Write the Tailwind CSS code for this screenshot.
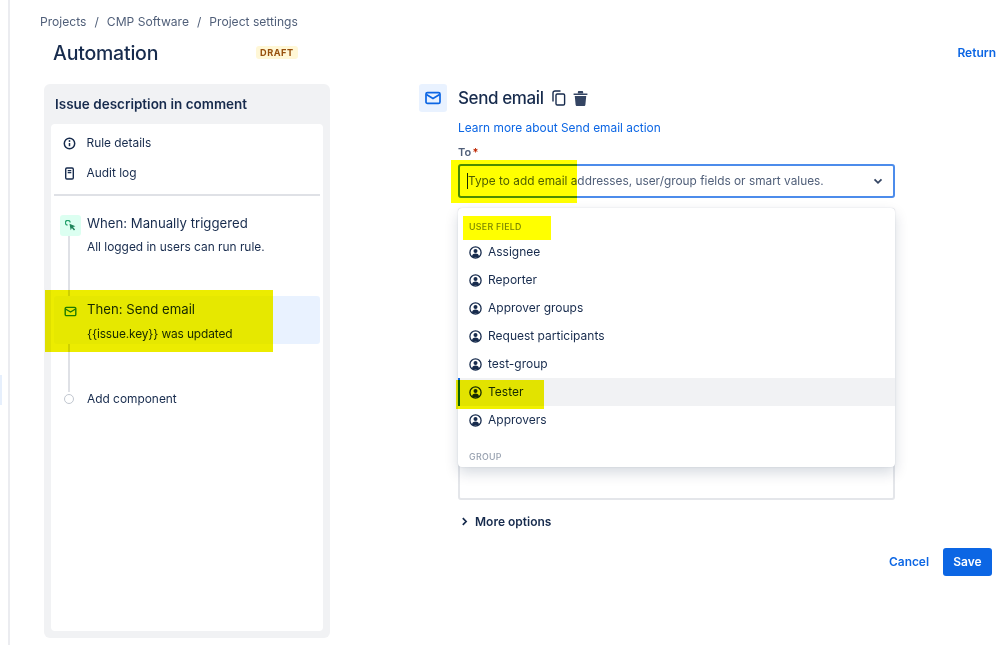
<!doctype html>
<html>
  <head>
    <meta charset="UTF-8" />
    <meta name="viewport" content="width=device-width, initial-scale=1.0" />
    <script src="https://cdn.jsdelivr.net/npm/@tailwindcss/browser@4"></script>
    <title>Automation</title>
  </head>
  <body class="bg-white">
    <div class="relative flex h-[645px] w-[999px] overflow-hidden bg-white font-['Inter','Liberation_Sans',sans-serif] text-[#172b4d]">
      <!-- left nav edge -->
      <div class="h-full w-[10px] shrink-0 border-r-2 border-[#ebecf0]"></div>
      <div class="absolute left-0 top-[375px] h-[30px] w-[2px] bg-[#e6effc]"></div>

      <div class="flex-1">
        <!-- breadcrumb -->
        <div class="flex h-[14px] mt-[15px] ml-[30px] items-center text-[12.1px] text-[#505f79]">
          <span>Projects</span><span class="mx-[8px]">/</span><span>CMP Software</span><span class="mx-[8px]">/</span><span>Project settings</span>
        </div>

        <!-- title row -->
        <div class="mt-[10px] flex h-[30px] items-center pl-[43px] pr-[3px]">
          <h1 class="w-[203px] text-[19.5px] font-medium tracking-[-0.2px] text-[#172b4d]">Automation</h1>
          <span class="mb-[3px] rounded-[3px] bg-[#fff7d6] px-[4px] text-[9.2px] leading-[13px] font-bold tracking-[0.5px] text-[#974f0c]">DRAFT</span>
          <a class="mb-[2px] ml-auto text-[12px] font-semibold text-[#0c66e4]">Return</a>
        </div>

        <div class="mt-[15px] flex">
          <!-- rule sidebar -->
          <div class="ml-[34px] flex h-[554px] w-[286px] shrink-0 flex-col rounded-[6px] bg-[#f1f2f4] px-[7px] pb-[7px]">
            <div class="flex h-[40px] items-center px-[4px] text-[13.5px] font-semibold">Issue description in comment</div>
            <div class="relative flex-1 rounded-[4px] bg-white px-[3px] pt-[4px]">
              <div class="flex h-[30px] items-center pl-[9px] text-[11.9px]">
                <svg class="mr-[10.5px] h-[13px] w-[13px]" viewBox="0 0 13 13" fill="none"><circle cx="6.5" cy="6.5" r="5.2" stroke="#172b4d" stroke-width="1.5"/><path d="M6.5 6v3.2" stroke="#172b4d" stroke-width="1.5"/><circle cx="6.5" cy="4" r=".9" fill="#172b4d"/></svg>
                <span>Rule details</span>
              </div>
              <div class="flex h-[30px] items-center pl-[9px] text-[11.9px]">
                <svg class="mr-[10.5px] h-[13px] w-[13px]" viewBox="0 0 13 13" fill="none"><rect x="2.7" y="1" width="7.6" height="11" rx="1.2" stroke="#172b4d" stroke-width="1.4"/><path d="M4.7 3.6h3.6M4.7 5.6h3.6" stroke="#172b4d" stroke-width="1.3"/></svg>
                <span>Audit log</span>
              </div>
              <div class="mt-[6px] h-[2px] bg-[#dfe1e6]"></div>

              <!-- connector between steps -->
              <div class="absolute left-[17px] top-[108px] h-[160px] w-[2px] bg-[#dfe1e6]"></div>

              <div class="relative mt-[19px] flex pl-[6px]">
                <div class="mr-[6px] flex h-[21px] w-[21px] items-center justify-center rounded-[3px] bg-[#dcfff1]">
                  <svg class="h-[12px] w-[12px]" viewBox="0 0 15 15" fill="none"><path d="M3.2 6.4a3 3 0 1 1 3.3-3.2" stroke="#22a06b" stroke-width="1.500"/><path d="M5.6 4.6l7.4 3.2-3 1.1 2.6 3-1.4 1.2-2.600-3-1.500 2.700z" fill="#1f845a"/></svg>
                </div>
                <div>
                  <div class="text-[13.2px] leading-[17px]">When: Manually triggered</div>
                  <div class="mt-[7px] text-[11.9px] leading-[15px]">All logged in users can run rule.</div>
                </div>
              </div>

              <div class="relative mt-[42px] flex h-[48px] rounded-[3px] bg-[linear-gradient(to_right,#f9fbff_219px,#e9f2ff_219px)] pl-[6px] pt-[5px]">
                <div class="mr-[6px] flex h-[21px] w-[21px] items-center justify-center">
                  <svg class="h-[13px] w-[13px]" viewBox="0 0 13 13" fill="none"><rect x="1.2" y="2.4" width="10.6" height="8.2" rx="1.2" stroke="#1f845a" stroke-width="1.4"/><path d="M1.5 4l5 3 5-3" stroke="#1f845a" stroke-width="1.4"/></svg>
                </div>
                <div>
                  <div class="text-[13.2px] leading-[17px]">Then: Send email</div>
                  <div class="mt-[8px] text-[11.9px] leading-[15px] tracking-[-0.12px]">{{issue.key}} was updated</div>
                </div>
              </div>

              <div class="relative mt-[47px] flex items-center pl-[10px] text-[11.9px] leading-[15px]">
                <span class="mr-[13px] h-[10px] w-[10px] rounded-full border-[1.5px] border-[#c1c7d0] bg-white"></span>
                <span>Add component</span>
              </div>
            </div>
          </div>

          <!-- send email panel -->
          <div class="ml-[89px] w-[476px]">
            <div class="flex items-center">
              <div class="flex h-[28px] w-[28px] items-center justify-center rounded-[3px] bg-[#e9f2ff]">
                <svg class="h-[18px] w-[18px]" viewBox="0 0 18 18" fill="none"><rect x="2" y="3.6" width="14" height="10.8" rx="1.5" stroke="#0c66e4" stroke-width="1.7"/><path d="M2.4 5.6l6.6 4 6.6-4" stroke="#0c66e4" stroke-width="1.7"/></svg>
              </div>
              <h2 class="ml-[11px] text-[17px] leading-[28px] font-medium tracking-[-0.4px]">Send email</h2>
              <svg class="ml-[7px] h-[16px] w-[16px]" viewBox="0 0 16 16" fill="none"><path d="M2 11.5V3a2 2 0 0 1 2-2h5.5" stroke="#172b4d" stroke-width="1.4"/><rect x="5" y="4" width="8.6" height="11" rx="1.3" stroke="#172b4d" stroke-width="1.4"/></svg>
              <svg class="ml-[5px] h-[17px] w-[17px]" viewBox="0 0 16 16"><path d="M1.5 3.4h13v1.400h-13zM5.500 2c0-.6.4-1 1-1h3c.6 0 1 .4 1 1v1h-5zM2.600 5.600h10.800l-.8 8.200c-.1.7-.6 1.200-1.300 1.200H4.700c-.7 0-1.200-.5-1.300-1.200z" fill="#344563"/></svg>
            </div>

            <div class="pl-[39px]">
              <a class="mt-[8px] block text-[11.9px] leading-[15px] text-[#0c66e4]">Learn more about Send email action</a>
              <div class="mt-[10px] text-[11px] leading-[14px] font-semibold text-[#505f79]">To <span class="-ml-[1.5px] text-[#bf2600]">*</span></div>
              <div class="mt-[5px] flex h-[34px] w-[437px] items-center rounded-[3px] border-2 border-[#4c8ceb] pl-[7px] pr-[10.5px] text-[11.85px] text-[#505f79]">
                <span class="h-[16px] w-px bg-[#172b4d]"></span>
                <span class="flex-1 pt-[1px]">Type to add email addresses, user/group fields or smart values.</span>
                <svg class="h-[10px] w-[10px]" viewBox="0 0 10 10" fill="none"><path d="M1.500 3.300L5 6.800l3.500-3.500" stroke="#344563" stroke-width="1.800"/></svg>
              </div>

              <!-- field behind the open menu -->
              <div class="mt-[10px] h-[292px] w-[437px] rounded-[3px] border-2 border-[#e4e6ea]"></div>

              <div class="mt-[14px] flex items-center text-[12px] leading-[15px] font-semibold">
                <svg class="mr-[6px] ml-[2px] h-[9px] w-[9px]" viewBox="0 0 9 9" fill="none"><path d="M2.800 1.200L6.100 4.500 2.800 7.800" stroke="#172b4d" stroke-width="1.700"/></svg>
                <span>More options</span>
              </div>

              <div class="mt-[19px] flex w-[534px] items-center justify-end">
                <a class="mr-[14px] text-[11.9px] font-semibold text-[#0c66e4]">Cancel</a>
                <button class="h-[28px] w-[49px] rounded-[3px] bg-[#0c66e4] text-[12px] font-semibold text-white">Save</button>
              </div>
            </div>
          </div>
        </div>
      </div>

      <!-- open dropdown menu -->
      <div class="absolute left-[458px] top-[208px] h-[259px] w-[437px] rounded-[4px] bg-white shadow-[0_6px_14px_rgba(9,30,66,0.16),0_0_2px_rgba(9,30,66,0.12)]">
        <div class="mt-[11px] ml-[11px] h-[16px] pt-[1px] text-[8.8px] leading-[14px] font-medium tracking-[0.3px] text-[#7a869a]">USER FIELD</div>
        <div class="mt-[3px] flex flex-col text-[12px]">
          <div class="flex h-[28px] items-center pl-[11px]">
            <svg class="mr-[6px] h-[13px] w-[13px]" viewBox="0 0 13 13" fill="none"><circle cx="6.500" cy="6.500" r="5.600" stroke="#172b4d" stroke-width="1.300"/><circle cx="6.500" cy="5" r="2" fill="#172b4d"/><path d="M3 10.500c0-2 1.500-3 3.500-3s3.500 1 3.500 3l-1.500 1h-4z" fill="#172b4d"/></svg>
            <span>Assignee</span>
          </div>
          <div class="flex h-[28px] items-center pl-[11px]">
            <svg class="mr-[6px] h-[13px] w-[13px]" viewBox="0 0 13 13" fill="none"><circle cx="6.500" cy="6.500" r="5.600" stroke="#172b4d" stroke-width="1.300"/><circle cx="6.500" cy="5" r="2" fill="#172b4d"/><path d="M3 10.500c0-2 1.500-3 3.500-3s3.500 1 3.500 3l-1.500 1h-4z" fill="#172b4d"/></svg>
            <span>Reporter</span>
          </div>
          <div class="flex h-[28px] items-center pl-[11px]">
            <svg class="mr-[6px] h-[13px] w-[13px]" viewBox="0 0 13 13" fill="none"><circle cx="6.500" cy="6.500" r="5.600" stroke="#172b4d" stroke-width="1.300"/><circle cx="6.500" cy="5" r="2" fill="#172b4d"/><path d="M3 10.500c0-2 1.500-3 3.500-3s3.500 1 3.500 3l-1.500 1h-4z" fill="#172b4d"/></svg>
            <span>Approver groups</span>
          </div>
          <div class="flex h-[28px] items-center pl-[11px]">
            <svg class="mr-[6px] h-[13px] w-[13px]" viewBox="0 0 13 13" fill="none"><circle cx="6.500" cy="6.500" r="5.600" stroke="#172b4d" stroke-width="1.300"/><circle cx="6.500" cy="5" r="2" fill="#172b4d"/><path d="M3 10.500c0-2 1.500-3 3.500-3s3.500 1 3.500 3l-1.500 1h-4z" fill="#172b4d"/></svg>
            <span>Request participants</span>
          </div>
          <div class="flex h-[28px] items-center pl-[11px]">
            <svg class="mr-[6px] h-[13px] w-[13px]" viewBox="0 0 13 13" fill="none"><circle cx="6.500" cy="6.500" r="5.600" stroke="#172b4d" stroke-width="1.300"/><circle cx="6.500" cy="5" r="2" fill="#172b4d"/><path d="M3 10.500c0-2 1.500-3 3.500-3s3.500 1 3.500 3l-1.500 1h-4z" fill="#172b4d"/></svg>
            <span>test-group</span>
          </div>
          <div class="flex h-[28px] items-center border-l-2 border-[#0c66e4] bg-[#f1f2f4] pl-[9px]">
            <svg class="mr-[6px] h-[13px] w-[13px]" viewBox="0 0 13 13" fill="none"><circle cx="6.500" cy="6.500" r="5.600" stroke="#172b4d" stroke-width="1.300"/><circle cx="6.500" cy="5" r="2" fill="#172b4d"/><path d="M3 10.500c0-2 1.500-3 3.500-3s3.500 1 3.500 3l-1.500 1h-4z" fill="#172b4d"/></svg>
            <span>Tester</span>
          </div>
          <div class="flex h-[28px] items-center pl-[11px]">
            <svg class="mr-[6px] h-[13px] w-[13px]" viewBox="0 0 13 13" fill="none"><circle cx="6.500" cy="6.500" r="5.600" stroke="#172b4d" stroke-width="1.300"/><circle cx="6.500" cy="5" r="2" fill="#172b4d"/><path d="M3 10.500c0-2 1.500-3 3.500-3s3.500 1 3.500 3l-1.500 1h-4z" fill="#172b4d"/></svg>
            <span>Approvers</span>
          </div>
        </div>
        <div class="mt-[16px] ml-[11px] text-[8.8px] leading-[14px] font-medium tracking-[0.3px] text-[#97a0af]">GROUP</div>
      </div>

      <!-- yellow marker highlights drawn over the screenshot -->
      <div class="absolute left-[45px] top-[290px] h-[62px] w-[228px] bg-[#ecec00] mix-blend-multiply"></div>
      <div class="absolute left-[451px] top-[160px] h-[43px] w-[126px] bg-[#ffff00] mix-blend-multiply"></div>
      <div class="absolute left-[463px] top-[216px] h-[24px] w-[88px] bg-[#ffff00] mix-blend-multiply"></div>
      <div class="absolute left-[456px] top-[380px] h-[29px] w-[88px] bg-[#f0f000] mix-blend-multiply"></div>
    </div>
  </body>
</html>
